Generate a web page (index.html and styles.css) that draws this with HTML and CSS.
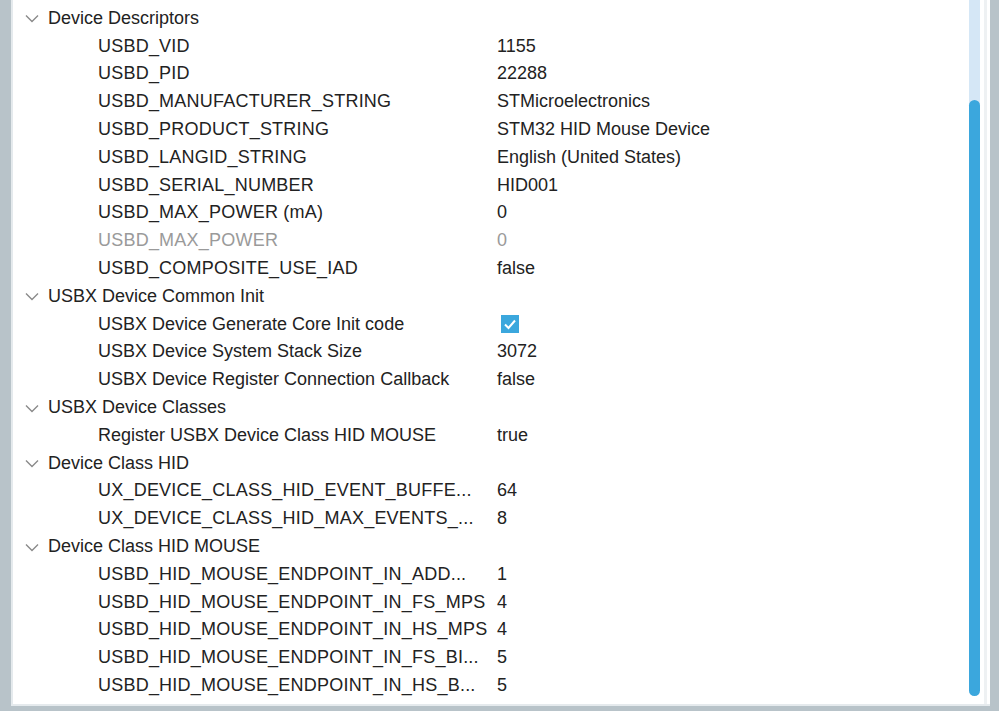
FILE: index.html
```html
<!DOCTYPE html>
<html>
<head>
<meta charset="utf-8">
<link rel="stylesheet" href="styles.css">
</head>
<body>
<div class="frame">
  <div class="panel">
    <div class="tree">
      <div class="row group"><svg class="chev" width="14" height="9" viewBox="0 0 14 9"><polyline points="1,1.5 7,7.5 13,1.5" fill="none" stroke="#8a8a8a" stroke-width="1.4"/></svg><span class="glabel">Device Descriptors</span></div>
      <div class="row"><span class="label id">USBD_VID</span><span class="value">1155</span></div>
      <div class="row"><span class="label id">USBD_PID</span><span class="value">22288</span></div>
      <div class="row"><span class="label id">USBD_MANUFACTURER_STRING</span><span class="value">STMicroelectronics</span></div>
      <div class="row"><span class="label id">USBD_PRODUCT_STRING</span><span class="value">STM32 HID Mouse Device</span></div>
      <div class="row"><span class="label id">USBD_LANGID_STRING</span><span class="value">English (United States)</span></div>
      <div class="row"><span class="label id">USBD_SERIAL_NUMBER</span><span class="value">HID001</span></div>
      <div class="row"><span class="label id">USBD_MAX_POWER (mA)</span><span class="value">0</span></div>
      <div class="row disabled"><span class="label id">USBD_MAX_POWER</span><span class="value">0</span></div>
      <div class="row"><span class="label id">USBD_COMPOSITE_USE_IAD</span><span class="value">false</span></div>
      <div class="row group"><svg class="chev" width="14" height="9" viewBox="0 0 14 9"><polyline points="1,1.5 7,7.5 13,1.5" fill="none" stroke="#8a8a8a" stroke-width="1.4"/></svg><span class="glabel">USBX Device Common Init</span></div>
      <div class="row"><span class="label">USBX Device Generate Core Init code</span><span class="value"><span class="check"><svg width="18" height="18" viewBox="0 0 18 18"><rect width="18" height="18" fill="#3ba7dd"/><polyline points="4,9.5 7.5,13 14,5.5" fill="none" stroke="#fff" stroke-width="2"/></svg></span></span></div>
      <div class="row"><span class="label">USBX Device System Stack Size</span><span class="value">3072</span></div>
      <div class="row"><span class="label">USBX Device Register Connection Callback</span><span class="value">false</span></div>
      <div class="row group"><svg class="chev" width="14" height="9" viewBox="0 0 14 9"><polyline points="1,1.5 7,7.5 13,1.5" fill="none" stroke="#8a8a8a" stroke-width="1.4"/></svg><span class="glabel">USBX Device Classes</span></div>
      <div class="row"><span class="label">Register USBX Device Class HID MOUSE</span><span class="value">true</span></div>
      <div class="row group"><svg class="chev" width="14" height="9" viewBox="0 0 14 9"><polyline points="1,1.5 7,7.5 13,1.5" fill="none" stroke="#8a8a8a" stroke-width="1.4"/></svg><span class="glabel">Device Class HID</span></div>
      <div class="row"><span class="label id">UX_DEVICE_CLASS_HID_EVENT_BUFFE...</span><span class="value">64</span></div>
      <div class="row"><span class="label id">UX_DEVICE_CLASS_HID_MAX_EVENTS_...</span><span class="value">8</span></div>
      <div class="row group"><svg class="chev" width="14" height="9" viewBox="0 0 14 9"><polyline points="1,1.5 7,7.5 13,1.5" fill="none" stroke="#8a8a8a" stroke-width="1.4"/></svg><span class="glabel">Device Class HID MOUSE</span></div>
      <div class="row"><span class="label id">USBD_HID_MOUSE_ENDPOINT_IN_ADD...</span><span class="value">1</span></div>
      <div class="row"><span class="label id">USBD_HID_MOUSE_ENDPOINT_IN_FS_MPS</span><span class="value">4</span></div>
      <div class="row"><span class="label id">USBD_HID_MOUSE_ENDPOINT_IN_HS_MPS</span><span class="value">4</span></div>
      <div class="row"><span class="label id">USBD_HID_MOUSE_ENDPOINT_IN_FS_BI...</span><span class="value">5</span></div>
      <div class="row"><span class="label id">USBD_HID_MOUSE_ENDPOINT_IN_HS_B...</span><span class="value">5</span></div>
    </div>
    <div class="scroll">
      <div class="thumb"></div>
    </div>
    <div class="gap"></div>
  </div>
</div>
</body>
</html>
```
FILE: styles.css
```css
html, body {
  margin: 0;
  padding: 0;
  background: #ffffff;
}
body {
  width: 999px;
  height: 721px;
  overflow: hidden;
  font-family: "Liberation Sans", Arial, sans-serif;
}
.frame {
  box-sizing: border-box;
  height: 711px;
  background: #b8c3c9;
  padding: 0 9px 5px 11px;
}
.panel {
  box-sizing: border-box;
  height: 100%;
  background: #ffffff;
  border-left: 2px solid #e5eaed;
  border-bottom: 2px solid #e5eaed;
  display: flex;
}
.tree {
  flex: 1;
  padding-top: 4.5px;
  color: #222222;
  font-size: 18px;
}
.row {
  height: 27.8px;
  display: flex;
  align-items: center;
  white-space: nowrap;
}
.group {
  padding-left: 12px;
}
.chev {
  display: block;
  margin-right: 9px;
  margin-top: 1px;
}
.label {
  width: 399px;
  padding-left: 85px;
  flex: none;
}
.label.id {
  letter-spacing: 0.22px;
}
.value {
  display: flex;
  align-items: center;
}
.disabled {
  color: #9a9a9a;
}
.check {
  display: block;
  margin-left: 4px;
  height: 18px;
}
.check svg {
  display: block;
}
.scroll {
  width: 11px;
  margin-right: 4px;
  background: #d5e7f6;
  position: relative;
  height: 696px;
  border-radius: 0 0 6px 6px;
}
.thumb {
  position: absolute;
  left: 0;
  right: 0;
  top: 100px;
  bottom: 0;
  background: #3ba7dd;
  border-radius: 6px;
}
.gap {
  width: 3px;
  background: #eef1f3;
  margin-right: 3px;
}
```
